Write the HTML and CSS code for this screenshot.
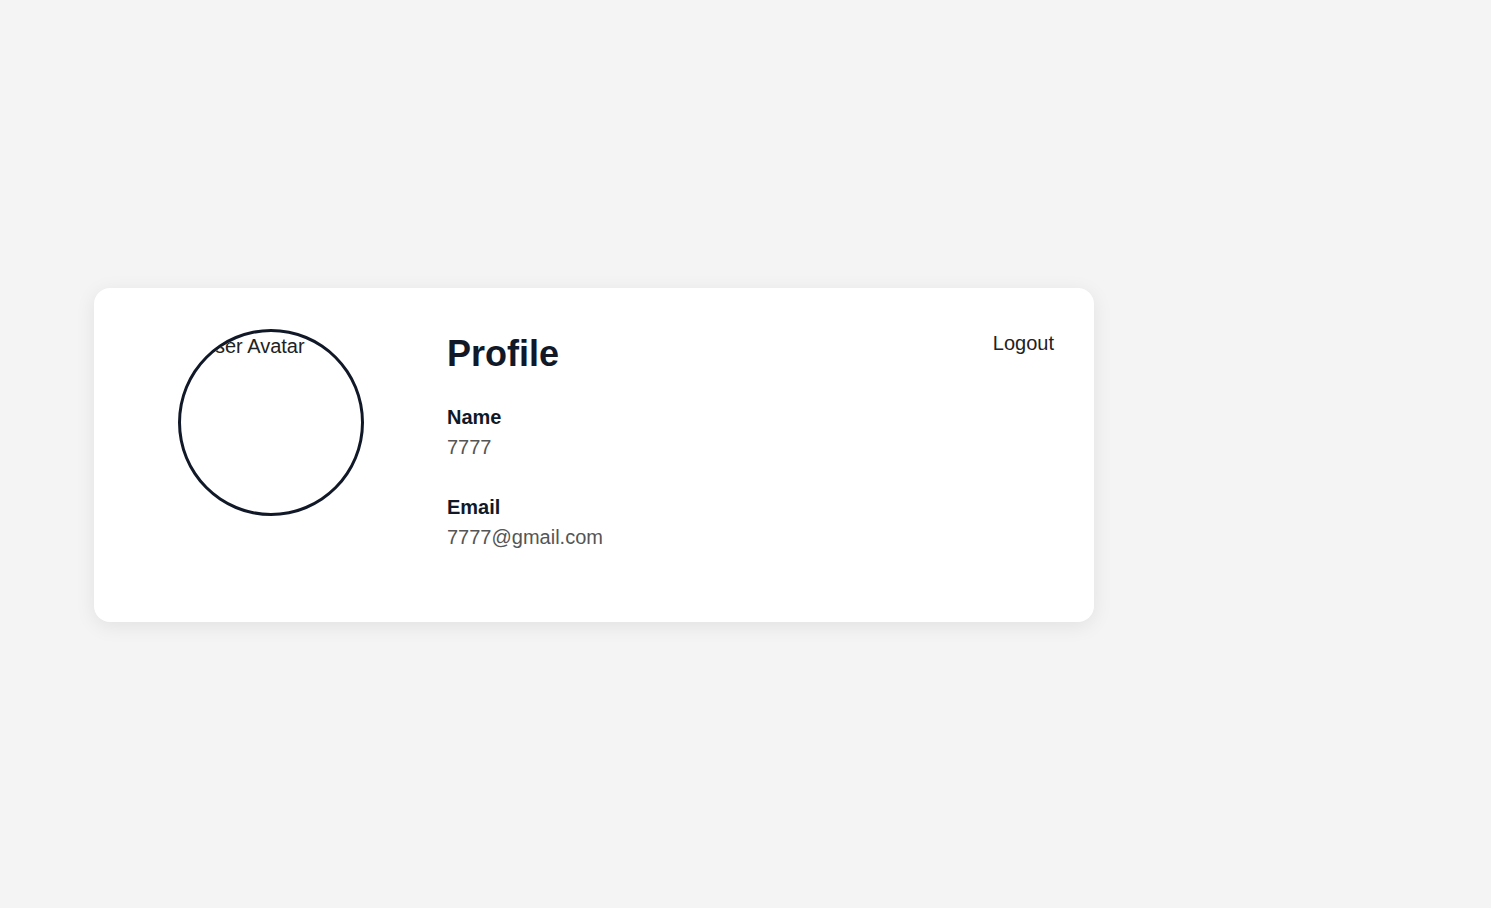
FILE: index.html
```html
<!DOCTYPE html>
<html lang="en">
<head>
<meta charset="utf-8">
<title>Profile</title>
<link rel="stylesheet" href="styles.css">
</head>
<body>
  <div class="card">
    <div class="avatar-col">
      <div class="avatar"><span class="avatar-alt">User Avatar</span></div>
    </div>
    <div class="info">
      <h1 class="title">Profile</h1>
      <div class="field">
        <div class="label">Name</div>
        <div class="value">7777</div>
      </div>
      <div class="field">
        <div class="label">Email</div>
        <div class="value">7777@gmail.com</div>
      </div>
    </div>
    <button class="logout" type="button">Logout</button>
  </div>
</body>
</html>
```
FILE: styles.css
```css
* { box-sizing: border-box; }
html, body { margin: 0; padding: 0; }
body {
  background: #f4f4f4;
  font-family: "Liberation Sans", Arial, sans-serif;
  min-height: 100vh;
  display: flex;
  align-items: center;
  padding-left: 94px;
  padding-top: 2px;
}
.card {
  width: 1000px;
  background: #ffffff;
  border-radius: 16px;
  box-shadow: 0 4px 20px rgba(0, 0, 0, 0.08);
  padding: 40px;
  display: flex;
  align-items: flex-start;
}
.avatar-col {
  width: 273px;
  display: flex;
  justify-content: center;
  padding-top: 1px;
  flex-shrink: 0;
}
.avatar {
  width: 186px;
  height: 187px;
  border: 3px solid #111827;
  border-radius: 50%;
  overflow: hidden;
  background: #fff;
}
.avatar-alt {
  display: block;
  white-space: nowrap;
  font-size: 20px;
  line-height: 23px;
  color: #222;
  padding-left: 20px;
  padding-top: 3px;
}
.info {
  flex: 1;
  padding-left: 40px;
  padding-top: 4px;
}
.title {
  margin: 0 0 26px;
  font-size: 36px;
  line-height: 44px;
  font-weight: 700;
  color: #111827;
}
.field { margin-bottom: 30px; }
.label {
  font-size: 20px;
  line-height: 30px;
  font-weight: 700;
  color: #111827;
}
.value {
  font-size: 20px;
  line-height: 30px;
  color: #555;
}
.logout {
  background: none;
  border: none;
  padding: 4px 0 0;
  margin: 0;
  font-family: "Liberation Sans", Arial, sans-serif;
  font-size: 20px;
  line-height: 23px;
  color: #222;
  cursor: pointer;
}
```
